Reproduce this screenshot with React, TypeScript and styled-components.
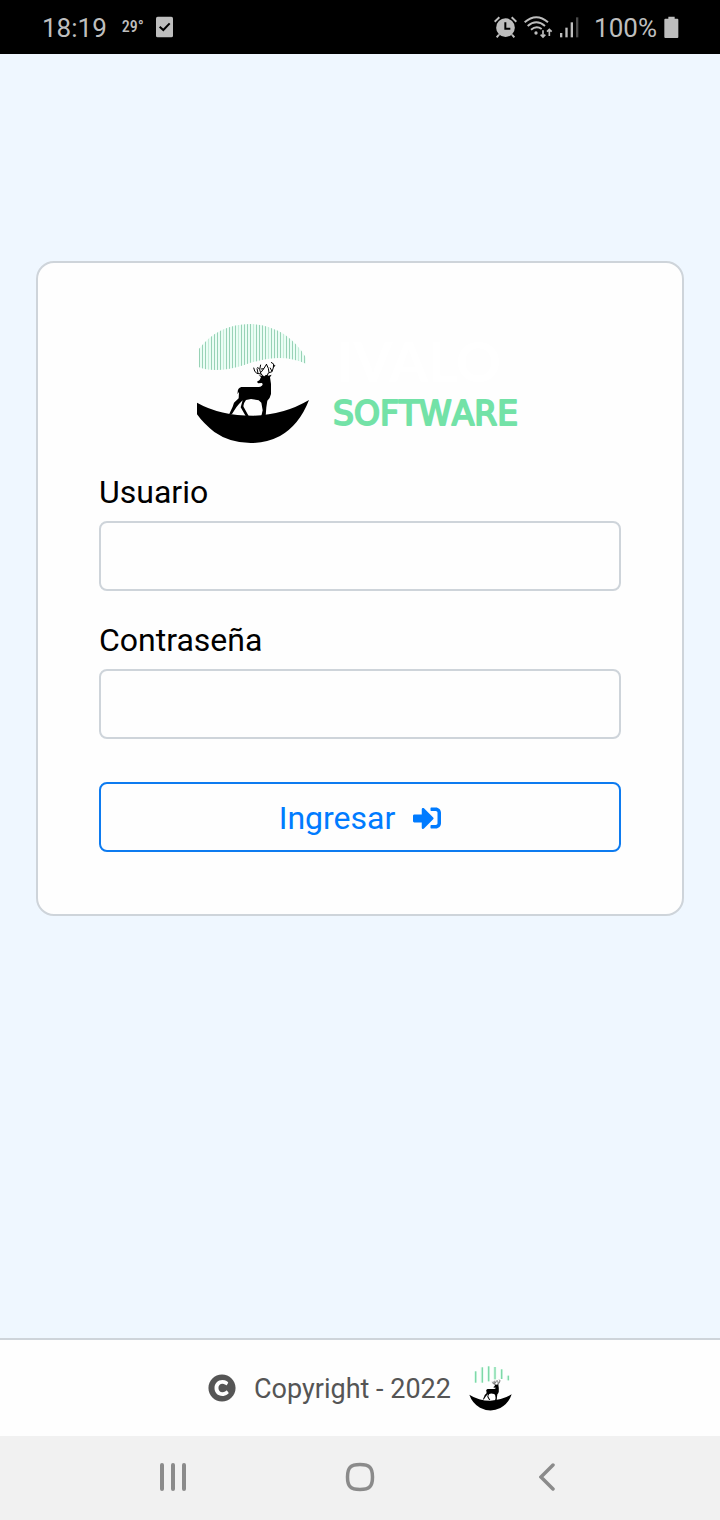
import React, { useState } from "react";
import styled, { createGlobalStyle } from "styled-components";
import { FaCopyright, FaSignInAlt } from "react-icons/fa";

const GlobalStyle = createGlobalStyle`
  * { box-sizing: border-box; }
  body {
    margin: 0;
    font-family: Roboto, "Liberation Sans", sans-serif;
    background: #eff7ff;
  }
`;

const Page = styled.div`
  display: flex;
  flex-direction: column;
  min-height: 100vh;
`;

const StatusBar = styled.header`
  display: flex;
  justify-content: space-between;
  align-items: center;
  height: 54px;
  padding: 0 41px 0 42px;
  background: #000;
  color: #bebebe;
  font-size: 26px;
  line-height: 32px;
`;

const StatusGroup = styled.div<{ $gap: number }>`
  display: flex;
  align-items: center;
  gap: ${(p) => p.$gap}px;
`;

const StatusText = styled.span`
  padding-top: 2px;
`;

const Temperature = styled.span`
  width: 19px;
  font-family: "Roboto Condensed", Roboto, "Liberation Sans", sans-serif;
  font-size: 16px;
  font-weight: 500;
  white-space: nowrap;
`;

const Battery = styled.div`
  display: flex;
  align-items: center;
  gap: 7px;
  margin-left: 8px;
`;

const Main = styled.main`
  flex: 1;
  padding: 207px 36px 48px;
`;

const Card = styled.form`
  display: flex;
  flex-direction: column;
  padding: 61px 61px 62px;
  border: 2px solid #ced4da;
  border-radius: 18px;
  background: #fefefe;
`;

const Brand = styled.div`
  display: flex;
  justify-content: center;
  gap: 24px;
  margin-bottom: 25px;
`;

const BrandName = styled.text`
  fill: #fff;
  font-family: Lato, "Liberation Sans", sans-serif;
  font-size: 56px;
  font-weight: 700;
`;

const BrandKind = styled.text`
  fill: #73e2a7;
  stroke: #73e2a7;
  stroke-width: 2px;
  stroke-linejoin: round;
  font-family: "DejaVu Sans", "Liberation Sans", sans-serif;
  font-size: 33px;
  font-kerning: none;
`;

const Field = styled.div`
  display: flex;
  flex-direction: column;
  gap: 5px;
  margin-bottom: 25px;
`;

const Label = styled.label`
  color: #000;
  font-size: 32px;
  line-height: 48px;
`;

const Input = styled.input`
  width: 100%;
  height: 70px;
  padding: 12px 24px;
  border: 2px solid #ced4da;
  border-radius: 8px;
  background: #fefefe;
  font: inherit;
  font-size: 32px;
`;

const SubmitButton = styled.button`
  display: flex;
  align-items: center;
  justify-content: center;
  gap: 18px;
  height: 70px;
  margin-top: 18px;
  padding: 2px 0 0;
  border: 2px solid #0d7bf0;
  border-radius: 8px;
  background: #fefefe;
  color: #007bff;
  font: inherit;
  font-size: 32px;
  line-height: 48px;
`;

const Footer = styled.footer`
  display: flex;
  align-items: center;
  justify-content: center;
  gap: 18px;
  height: 98px;
  border-top: 2px solid #ced4da;
  background: #fefefe;
  color: #555;
  font-size: 27px;
  line-height: 40px;
`;

const FooterText = styled.span`
  padding-top: 2px;
`;

const NavBar = styled.nav`
  display: grid;
  grid-template-columns: repeat(3, 1fr);
  height: 84px;
  padding: 0 11% 3px;
  background: #f1f1f1;
`;

const NavButton = styled.button`
  display: flex;
  align-items: center;
  justify-content: center;
  border: 0;
  background: none;
  color: #8b8b8b;
`;

const range = (from: number, to: number, step: number) =>
  Array.from({ length: Math.floor((to - from) / step) + 1 }, (_, i) => from + i * step);

const Deer = () => (
  <g>
    <path
      fill="#000"
      d="M143 232Q143 219 154 216L206 216Q217 215 218 208L216 204L204 205L201 200L209 195L213 186L206 181L217 182L223 184L228 179L235 182L245 179L240 187L243 207L243 237Q240 251 232 257L229 277L227 303L214 303L218 286L214 263L206 256L183 252L168 255Q158 268 161 276L176 303L167 303L152 277L158 256L147 267L139 277L126 297L116 301L128 275L132 263L146 250L147 231L142 237Z"
    />
    <path
      fill="none"
      stroke="#000"
      strokeWidth="3"
      strokeLinejoin="round"
      d="M221 184L213 177L200 175L194 168L191 158M204 175L201 160M213 177L209 164L212 149M209 163L202 156M213 172L222 160L230 147M213 162L222 161M231 183L235 174L246 170L250 158L251 147L243 142M237 173L235 160L229 147M246 169L240 158M250 158L255 150"
    />
  </g>
);

const LogoMark = () => (
  <svg width="112" height="119" viewBox="21 27 336 357" role="img" aria-label="Ivalo Software">
    <clipPath id="aurora">
      <path d="M26 103Q55 65 94 46Q135 27 180 27Q235 27 285 59Q325 88 348 128L348 146Q310 129 268 129Q220 130 165 149Q118 165 76 165Q45 165 26 156Z" />
    </clipPath>
    <g clipPath="url(#aurora)">
      <rect x="20" y="20" width="330" height="150" fill="#ebfdf5" />
      {range(27, 348, 9).map((x, i) => (
        <rect key={x} x={x} y="20" width="3" height="150" fill={i % 5 === 3 ? "#c4ecd8" : "#98d2b6"} />
      ))}
    </g>
    <path d="M21 263Q90 302 190 302Q281 300 357 255Q328 330 270 363Q230 384 182 384Q120 384 73 351Q40 325 21 298Z" />
    <Deer />
  </svg>
);

const Wordmark = () => (
  <svg width="191" height="119" viewBox="0 0 191 119">
    <BrandName x="4" y="58">IVALO</BrandName>
    <BrandKind x="0" y="101">SOFTWARE</BrandKind>
  </svg>
);

const SmallLogo = () => (
  <svg width="43" height="45" viewBox="26 32 129 135" aria-hidden="true">
    {[
      [44, 48, 82],
      [64, 36, 82],
      [83, 33, 78],
      [102, 35, 72],
      [122, 42, 71],
      [142, 61, 75],
    ].map(([x, top, bottom]) => (
      <g key={x}>
        <rect x={x - 3} y={top} width="9" height={bottom - top} fill="#e0fbee" />
        <rect x={x} y={top} width="4" height={bottom - top} fill="#7fd8a8" />
      </g>
    ))}
    <path d="M27 118Q55 136 90 136Q126 135 154 117Q145 145 120 158Q90 173 59 157Q36 144 27 118Z" />
    <g transform="translate(23 19) scale(0.38)">
      <Deer />
    </g>
  </svg>
);

const TaskIcon = () => (
  <svg width="17" height="22" viewBox="0 0 51 66" aria-hidden="true">
    <rect y="2" width="51" height="62" rx="5" fill="#bebebe" />
    <path d="M11 32L22 42L41 22" fill="none" stroke="#000" strokeWidth="6" />
  </svg>
);

const AlarmIcon = () => (
  <svg width="23" height="22" viewBox="39 46 69 66" aria-hidden="true">
    <g fill="none" stroke="#bebebe" strokeWidth="6">
      <path d="M41 63L55 50M92 50L106 63M54 102L47 110M93 102L100 110" />
    </g>
    <circle cx="73.500" cy="81" r="28" fill="#bebebe" />
    <path d="M73 65V84H88" fill="none" stroke="#000" strokeWidth="6" />
  </svg>
);

const WifiIcon = () => (
  <svg width="29" height="23" viewBox="131 45 87 69" aria-hidden="true">
    <g fill="none" stroke="#bebebe" strokeWidth="6">
      <path d="M133 64Q168 34 203 64M142 75Q168 53 194 75M152 86Q168 73 184 84" />
      <path d="M188 88V107M181 101L188 108L195 101M207 105V86M200 92L207 85L214 92" strokeWidth="5" />
    </g>
    <circle cx="167" cy="96" r="5" fill="#bebebe" />
  </svg>
);

const SignalIcon = () => (
  <svg width="19" height="21" viewBox="239 50 57 63" aria-hidden="true">
    <g fill="#bebebe">
      <rect x="239" y="98" width="7" height="13" />
      <rect x="255" y="82" width="7" height="29" />
      <rect x="271" y="66" width="7" height="45" />
      <rect x="287" y="51" width="7" height="60" fill="#4a4a4a" />
    </g>
  </svg>
);

const BatteryIcon = () => (
  <svg width="15" height="23" viewBox="551 45 45 69" aria-hidden="true">
    <path fill="#bebebe" d="M564 47H583V53H591Q594 53 594 56V108Q594 111 591 111H555Q552 111 552 108V56Q552 53 555 53H564Z" />
  </svg>
);

const RecentsIcon = () => (
  <svg width="26" height="28" viewBox="0 0 26 28" aria-hidden="true">
    <path d="M2 2V26M13 2V26M24 2V26" stroke="currentColor" strokeWidth="4" strokeLinecap="round" />
  </svg>
);

const HomeIcon = () => (
  <svg width="30" height="30" viewBox="0 0 30 30" aria-hidden="true">
    <path
      d="M15 2.500C24.500 2.500 27.500 5.500 27.500 15S24.500 27.500 15 27.500S2.500 24.500 2.500 15S5.500 2.500 15 2.500Z"
      fill="none"
      stroke="currentColor"
      strokeWidth="3.500"
    />
  </svg>
);

const BackIcon = () => (
  <svg width="16" height="28" viewBox="0 0 16 28" aria-hidden="true">
    <path d="M14 2L2 14L14 26" fill="none" stroke="currentColor" strokeWidth="3.500" strokeLinecap="round" />
  </svg>
);

export default function App() {
  const [user, setUser] = useState("");
  const [password, setPassword] = useState("");

  return (
    <Page>
      <GlobalStyle />
      <StatusBar>
        <StatusGroup $gap={15}>
          <StatusText>18:19</StatusText>
          <Temperature>29°</Temperature>
          <TaskIcon />
        </StatusGroup>
        <StatusGroup $gap={7}>
          <AlarmIcon />
          <WifiIcon />
          <SignalIcon />
          <Battery>
            <StatusText>100%</StatusText>
            <BatteryIcon />
          </Battery>
        </StatusGroup>
      </StatusBar>
      <Main>
        <Card onSubmit={(e) => e.preventDefault()}>
          <Brand>
            <LogoMark />
            <Wordmark />
          </Brand>
          <Field>
            <Label htmlFor="user">Usuario</Label>
            <Input id="user" type="text" value={user} onChange={(e) => setUser(e.target.value)} />
          </Field>
          <Field>
            <Label htmlFor="password">Contraseña</Label>
            <Input id="password" type="password" value={password} onChange={(e) => setPassword(e.target.value)} />
          </Field>
          <SubmitButton type="submit">
            Ingresar
            <FaSignInAlt size={28} aria-hidden="true" />
          </SubmitButton>
        </Card>
      </Main>
      <Footer>
        <FaCopyright size={28} aria-hidden="true" />
        <FooterText>Copyright - 2022</FooterText>
        <SmallLogo />
      </Footer>
      <NavBar>
        <NavButton type="button" aria-label="Recientes">
          <RecentsIcon />
        </NavButton>
        <NavButton type="button" aria-label="Inicio">
          <HomeIcon />
        </NavButton>
        <NavButton type="button" aria-label="Atrás">
          <BackIcon />
        </NavButton>
      </NavBar>
    </Page>
  );
}
